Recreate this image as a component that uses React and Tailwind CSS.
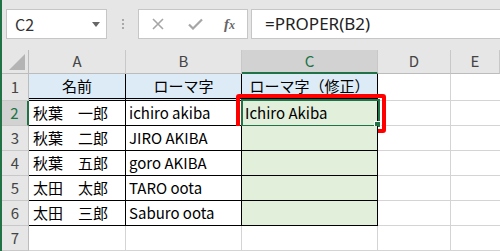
import React from "react";

const font = { fontFamily: '"Noto Sans CJK JP", "Noto Sans", sans-serif' };

const rows = [
  ["名前", "ローマ字", "ローマ字（修正）"],
  ["秋葉　一郎", "ichiro akiba", "Ichiro Akiba"],
  ["秋葉　二郎", "JIRO AKIBA", ""],
  ["秋葉　五郎", "goro AKIBA", ""],
  ["太田　太郎", "TARO oota", ""],
  ["太田　三郎", "Saburo oota", ""],
  ["", "", ""],
];

const cols = ["A", "B", "C", "D", "E"];

function ColHeader({ label, active }) {
  return (
    <div
      className={`flex items-center justify-center text-[15px] border-r border-[#c8c8c8] ${
        active
          ? "bg-[#d2d2d2] text-[#217346] border-b-2 border-b-[#217346]"
          : "bg-[#e6e6e6] text-[#444] border-b border-b-[#bcbcbc]"
      }`}
    >
      {label}
    </div>
  );
}

function Row({ idx, data }) {
  const n = idx + 1;
  const inTable = n <= 6;
  const head = n === 1;
  const bottom = head
    ? "border-b-[3px] border-double border-b-black"
    : n <= 6
    ? "border-b border-b-black"
    : "border-b border-b-[#d4d4d4]";
  const h = head ? "h-[27px]" : "h-[25px]";
  return (
    <>
      <div
        className={`${h} flex items-center justify-center text-[15px] border-b border-[#c8c8c8] ${
          n === 2
            ? "bg-[#d2d2d2] text-[#217346] border-r-2 border-r-[#217346]"
            : "bg-[#e6e6e6] text-[#444] border-r border-r-[#bcbcbc]"
        }`}
      >
        {n}
      </div>
      {data.map((v, i) => {
        const fill = head
          ? "bg-[#ddebf7]"
          : i === 2 && inTable
          ? "bg-[#e2efda]"
          : "bg-white";
        const right = inTable ? "border-r border-r-black" : "border-r border-r-[#d4d4d4]";
        return (
          <div
            key={i}
            className={`${h} relative flex items-center text-[15px] text-black ${fill} ${right} ${
              inTable ? bottom : "border-b border-b-[#d4d4d4]"
            } ${head ? "justify-center" : i === 0 ? "pl-[4px]" : "pl-[3px]"}`}
          >
            <span className="whitespace-pre">{v}</span>
            {n === 2 && i === 2 && (
              <div className="absolute -left-[1px] -top-[2px] w-[139px] h-[28px] border-2 border-[#217346]">
                <div className="absolute -right-[3px] -bottom-[3px] w-[7px] h-[7px] bg-[#217346] border border-white" />
              </div>
            )}
            {n === 2 && i === 2 && (
              <div className="absolute -left-[6px] -top-[7px] w-[150px] h-[39px] border-[4px] border-[#ff0000] rounded-[3px]" />
            )}
          </div>
        );
      })}
      <div className={`${h} bg-white border-r border-b border-[#d4d4d4]`} />
      <div className={`${h} bg-white border-b border-[#d4d4d4]`} />
    </>
  );
}

export default function App() {
  return (
    <div className="w-[500px] h-[251px] overflow-hidden flex bg-[#e6e6e6]" style={font}>
      <div className="w-[2px] bg-[#217346] shrink-0" />
      <div className="flex-1 flex flex-col">
        {/* formula bar */}
        <div className="h-[50px] flex items-start pt-[9px] pl-[4px]">
          <div className="w-[101px] h-[30px] bg-white border border-[#c6c6c6] flex items-center pl-[8px] pr-[6px]">
            <span className="text-[16px] text-[#333] flex-1">C2</span>
            <svg width="8" height="5" viewBox="0 0 8 5">
              <path d="M0 0h8L4 5z" fill="#666" />
            </svg>
          </div>
          <div className="w-[31px] h-[30px] flex flex-col items-center justify-center gap-[2px]">
            <div className="w-[2px] h-[2px] bg-[#a8a8a8]" />
            <div className="w-[2px] h-[2px] bg-[#a8a8a8]" />
            <div className="w-[2px] h-[2px] bg-[#a8a8a8]" />
          </div>
          <div className="w-[110px] h-[30px] bg-white border border-[#c6c6c6] flex items-center pl-[12px]">
            <svg width="14" height="14" viewBox="0 0 14 14" className="mr-[23px]">
              <path d="M2 2l10 10M12 2L2 12" stroke="#a6a6a6" strokeWidth="1.6" />
            </svg>
            <svg width="15" height="12" viewBox="0 0 15 12" className="mr-[21px]">
              <path d="M1 6.5l4 4L14 1.5" stroke="#a6a6a6" strokeWidth="2.2" fill="none" />
            </svg>
            <span
              className="italic text-[15px] text-[#666] font-bold"
              style={{ fontFamily: '"Liberation Serif", serif' }}
            >
              f<span className="text-[12px]">x</span>
            </span>
          </div>
          <div className="ml-[3px] flex-1 h-[30px] bg-white border border-[#c6c6c6] border-r-0 flex items-center pl-[13px]">
            <span className="text-[17px] text-[#222]" style={{ fontFamily: '"Noto Sans", sans-serif' }}>
              =PROPER(B2)
            </span>
          </div>
        </div>
        {/* sheet */}
        <div className="grid grid-cols-[27px_97px_116px_136px_73px_1fr] grid-rows-[24px]">
          <div className="h-[24px] relative bg-[#e6e6e6] border-r border-b border-[#bcbcbc]">
            <svg width="16" height="16" viewBox="0 0 16 16" className="absolute right-[3px] bottom-[3px]">
              <path d="M16 0V16H0z" fill="#b4b4b4" />
            </svg>
          </div>
          {cols.map((c) => (
            <ColHeader key={c} label={c} active={c === "C"} />
          ))}
          {rows.map((r, i) => (
            <Row key={i} idx={i} data={r} />
          ))}
        </div>
      </div>
    </div>
  );
}
